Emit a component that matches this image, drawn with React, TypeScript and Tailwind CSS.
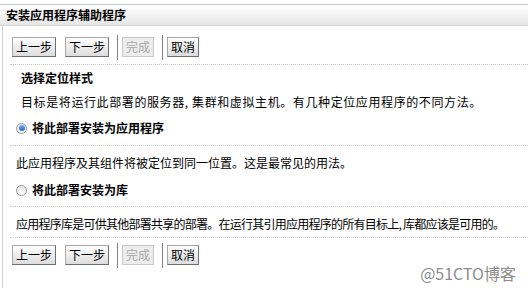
import React from 'react';

const font = { fontFamily: '"Noto Sans CJK SC", "Noto Sans", sans-serif' };

const Btn: React.FC<{ label: string; disabled?: boolean }> = ({ label, disabled }) => (
  <button
    disabled={disabled}
    className={`h-[20px] px-[3px] text-[12px] leading-none border ${
      disabled
        ? 'text-[#a8a8a8] border-[#c8c8c8] bg-[#ededed]'
        : 'text-black border-[#a8a8a8] border-r-[#6f6f6f] border-b-[#6f6f6f] bg-gradient-to-b from-white to-[#dcdcdc]'
    }`}
  >
    {label}
  </button>
);

const Sep = () => <div className="w-px h-[25px] bg-[#808080] mx-[4px]" />;

const Toolbar = () => (
  <div className="flex items-center pl-[9px] h-[20px]">
    <Btn label="上一步" />
    <div className="w-[9px]" />
    <Btn label="下一步" />
    <div className="w-[4px]" />
    <Sep />
    <Btn label="完成" disabled />
    <div className="w-[4px]" />
    <Sep />
    <Btn label="取消" />
  </div>
);

const Dotted = () => <div className="ml-[7px] border-t border-dotted border-[#c8c8c8]" />;

const Radio: React.FC<{ checked?: boolean }> = ({ checked }) => (
  <span className="inline-flex items-center justify-center w-[11px] h-[11px] rounded-full border border-[#9a9a9a] bg-gradient-to-b from-[#e6e6e6] to-white">
    {checked && (
      <span className="w-[6px] h-[6px] rounded-full bg-gradient-to-b from-[#7fb1f5] to-[#1a5fd0]" />
    )}
  </span>
);

export default function App() {
  return (
    <div className="w-[528px] h-[288px] bg-white relative overflow-hidden text-[12px] text-black" style={font}>
      <div className="h-[4px]" />
      <div className="border-t border-[#c3c8cd] h-[22px] bg-gradient-to-b from-white to-[#e4e5e4] border-b border-b-[#d6d8d6] flex items-center pl-[6px] font-bold text-[12px]">
        安装应用程序辅助程序
      </div>
      <div className="ml-[2px] border-l border-[#cfcfcf] h-[262px] pt-[11px]">
        <Toolbar />
        <div className="h-[7px]" />
        <Dotted />
        <div className="h-[26px] flex items-center pl-[18px] font-bold">选择定位样式</div>
        <div className="h-[22px] flex items-center pl-[18px] whitespace-nowrap tracking-[0.6px]">
          目标是将运行此部署的服务器, 集群和虚拟主机。有几种定位应用程序的不同方法。
        </div>
        <div className="h-[30px] flex items-center pl-[13px] gap-[5px] font-bold">
          <Radio checked />
          将此部署安装为应用程序
        </div>
        <div className="h-[2px]" />
        <Dotted />
        <div className="h-[34px] flex items-center pl-[13px] whitespace-nowrap">
          此应用程序及其组件将被定位到同一位置。这是最常见的用法。
        </div>
        <div className="h-[20px] flex items-center pl-[13px] gap-[5px] font-bold">
          <Radio />
          将此部署安装为库
        </div>
        <div className="h-[6px]" />
        <Dotted />
        <div className="h-[30px] pt-[4px] flex items-center pl-[13px] whitespace-nowrap tracking-[-0.75px]">
          应用程序库是可供其他部署共享的部署。在运行其引用应用程序的所有目标上, 库都应该是可用的。
        </div>
        <Dotted />
        <div className="h-[7px]" />
        <Toolbar />
      </div>
      <div className="absolute right-[12px] bottom-[7px] text-[16px] text-[#8c8c8c] leading-none">@51CTO博客</div>
    </div>
  );
}
